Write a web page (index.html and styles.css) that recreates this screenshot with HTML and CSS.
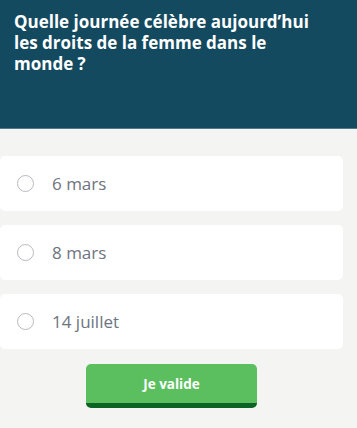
FILE: index.html
```html
<!DOCTYPE html>
<html lang="fr">
<head>
    <meta charset="UTF-8">
    <meta name="viewport" content="width=device-width, initial-scale=1.0">
    <title>Quiz</title>
    <link rel="stylesheet" href="styles.css">
</head>
<body>

    <div class="question">
        <h1>Quelle journée célèbre aujourd’hui les droits de la femme dans le monde ?</h1>
    </div>

    <div class="answers">
        <label class="answer">
            <span class="radio"></span>
            <span class="label">6 mars</span>
        </label>
        <label class="answer">
            <span class="radio"></span>
            <span class="label">8 mars</span>
        </label>
        <label class="answer">
            <span class="radio"></span>
            <span class="label">14 juillet</span>
        </label>
    </div>

    <div class="actions">
        <button class="validate">Je valide</button>
    </div>

</body>
</html>
```

FILE: styles.css
```css
body {
    margin: 0;
    background: #f4f4f2;
    font-family: "Open Sans", "Liberation Sans", sans-serif;
}

.question {
    background: #144a5f;
    height: 129px;
    border-bottom: 1px solid #4f7a8a;
    box-sizing: border-box;
    padding: 11px 40px 0 14px;
}

.question h1 {
    margin: 0;
    color: #fff;
    font-size: 17px;
    line-height: 21px;
    font-weight: 700;
}

.answers {
    display: flex;
    flex-direction: column;
    gap: 14px;
    padding-top: 27px;
    width: 343px;
}

.answer {
    display: flex;
    align-items: center;
    height: 55px;
    background: #fff;
    border-radius: 5px;
    padding-left: 17px;
}

.answer .radio {
    width: 15px;
    height: 15px;
    border: 1px solid #b9b9c2;
    border-radius: 50%;
}

.answer .label {
    margin-left: 18px;
    font-size: 17px;
    color: #6e7480;
}

.actions {
    display: flex;
    padding-top: 15px;
    padding-left: 86px;
}

.validate {
    width: 171px;
    height: 44px;
    border: none;
    border-bottom: 5px solid #0b6424;
    border-radius: 5px;
    background: #5cbf5f;
    color: #fff;
    font-family: inherit;
    font-size: 13.5px;
    font-weight: 700;
    padding: 0;
    cursor: pointer;
}
```
